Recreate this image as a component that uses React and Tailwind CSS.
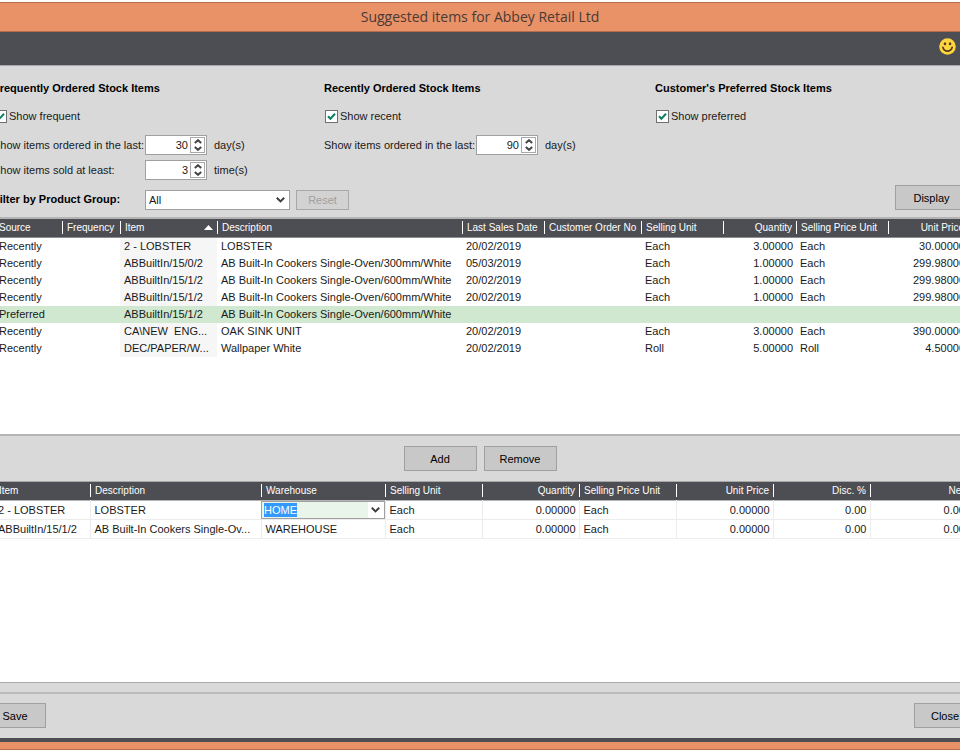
import React, { useEffect, useRef, useState } from 'react';

const STOCK_COLUMNS = [
  { key: 'source', title: 'Source', width: 'w-[70px]' },
  { key: 'frequency', title: 'Frequency', width: 'w-[58px]' },
  { key: 'item', title: 'Item', width: 'w-[97px]', sorted: true },
  { key: 'description', title: 'Description', width: 'w-auto' },
  { key: 'lastSale', title: 'Last Sales Date', width: 'w-[82px]' },
  { key: 'orderNo', title: 'Customer Order No', width: 'w-[97px]' },
  { key: 'unit', title: 'Selling Unit', width: 'w-[82px]' },
  { key: 'quantity', title: 'Quantity', width: 'w-[73px]', right: true },
  { key: 'priceUnit', title: 'Selling Price Unit', width: 'w-[92px]' },
  { key: 'price', title: 'Unit Price', width: 'w-[80px]', right: true },
];

const OVEN_300 = 'AB Built-In Cookers Single-Oven/300mm/White';
const OVEN_600 = 'AB Built-In Cookers Single-Oven/600mm/White';

const STOCK_ROWS = [
  { source: 'Recently', item: '2 - LOBSTER', description: 'LOBSTER', lastSale: '20/02/2019', unit: 'Each', quantity: '3.00000', priceUnit: 'Each', price: '30.00000' },
  { source: 'Recently', item: 'ABBuiltIn/15/0/2', description: OVEN_300, lastSale: '05/03/2019', unit: 'Each', quantity: '1.00000', priceUnit: 'Each', price: '299.98000' },
  { source: 'Recently', item: 'ABBuiltIn/15/1/2', description: OVEN_600, lastSale: '20/02/2019', unit: 'Each', quantity: '1.00000', priceUnit: 'Each', price: '299.98000' },
  { source: 'Recently', item: 'ABBuiltIn/15/1/2', description: OVEN_600, lastSale: '20/02/2019', unit: 'Each', quantity: '1.00000', priceUnit: 'Each', price: '299.98000' },
  { source: 'Preferred', item: 'ABBuiltIn/15/1/2', description: OVEN_600 },
  { source: 'Recently', item: 'CA\\NEW  ENG...', description: 'OAK SINK UNIT', lastSale: '20/02/2019', unit: 'Each', quantity: '3.00000', priceUnit: 'Each', price: '390.00000' },
  { source: 'Recently', item: 'DEC/PAPER/W...', description: 'Wallpaper White', lastSale: '20/02/2019', unit: 'Roll', quantity: '5.00000', priceUnit: 'Roll', price: '4.50000' },
];

const ORDER_COLUMNS = [
  { key: 'item', title: 'Item', width: 'w-[98px]' },
  { key: 'description', title: 'Description', width: 'w-auto' },
  { key: 'warehouse', title: 'Warehouse', width: 'w-[124px]' },
  { key: 'unit', title: 'Selling Unit', width: 'w-[97px]' },
  { key: 'quantity', title: 'Quantity', width: 'w-[97px]', right: true },
  { key: 'priceUnit', title: 'Selling Price Unit', width: 'w-[97px]' },
  { key: 'price', title: 'Unit Price', width: 'w-[97px]', right: true },
  { key: 'discount', title: 'Disc. %', width: 'w-[97px]', right: true },
  { key: 'net', title: 'Net', width: 'w-[98px]', right: true },
];

const ORDER_ROWS = [
  { item: '2 - LOBSTER', description: 'LOBSTER', warehouse: 'HOME', unit: 'Each', quantity: '0.00000', priceUnit: 'Each', price: '0.00000', discount: '0.00', net: '0.00' },
  { item: 'ABBuiltIn/15/1/2', description: 'AB Built-In Cookers Single-Ov...', warehouse: 'WAREHOUSE', unit: 'Each', quantity: '0.00000', priceUnit: 'Each', price: '0.00000', discount: '0.00', net: '0.00' },
];

function Chevron() {
  return (
    <svg width="9" height="6" viewBox="0 0 9 6" fill="none" stroke="#3c3e42" strokeWidth="2" aria-hidden="true">
      <path d="M0.8 0.8 4.5 4.4 8.2 0.8" />
    </svg>
  );
}

function Smiley() {
  return (
    <svg width="17" height="17" viewBox="0 0 16 16" aria-hidden="true">
      <circle cx="8" cy="8" r="7.8" fill="#fcd53f" />
      <ellipse cx="5.6" cy="5.4" rx="1.2" ry="1.5" fill="#5a3a1c" />
      <ellipse cx="10.4" cy="5.4" rx="1.2" ry="1.5" fill="#5a3a1c" />
      <path d="M3.6 8.8c.7 2.4 2.3 3.6 4.4 3.6s3.7-1.2 4.4-3.6" fill="none" stroke="#5a3a1c" strokeWidth="1.6" strokeLinecap="round" />
    </svg>
  );
}

function Button({ className = '', ...props }) {
  return (
    <button
      type="button"
      className={`h-[25px] border border-[#a0a0a0] bg-[#c8c8c8] text-center text-black hover:bg-[#d2d2d2] ${className}`}
      {...props}
    />
  );
}

function Check({ label }) {
  const [on, setOn] = useState(true);
  return (
    <label className="mt-3 flex h-4 items-center gap-[2px] pl-px">
      <span className="grid size-[13px] place-items-center">
        <input
          type="checkbox"
          checked={on}
          onChange={(e) => setOn(e.target.checked)}
          className="col-start-1 row-start-1 size-[13px] appearance-none border border-[#707070] bg-white"
        />
        {on && (
          <svg className="pointer-events-none col-start-1 row-start-1" width="9" height="9" viewBox="0 0 9 9" fill="none" stroke="#0e7f67" strokeWidth="2" aria-hidden="true">
            <path d="M1 4.2 3.4 6.8 8 1.8" />
          </svg>
        )}
      </span>
      {label}
    </label>
  );
}

function Spinner({ id, label, initial, unit, className }) {
  const [value, setValue] = useState(initial);
  return (
    <div className={`flex h-5 items-center ${className}`}>
      <label htmlFor={id} className="w-[152px] shrink-0 whitespace-nowrap">{label}</label>
      <div className="flex h-5 w-[62px] items-center border border-[#a0a0a0] bg-white pr-px">
        <input
          id={id}
          inputMode="numeric"
          value={value}
          onChange={(e) => setValue(Number(e.target.value) || 0)}
          className="w-full min-w-0 pr-[2px] text-right outline-none"
        />
        <div className="flex h-4 w-[15px] shrink-0 flex-col border border-[#a8a8a8]">
          <button type="button" aria-label="Increase" onClick={() => setValue(value + 1)} className="flex flex-1 items-center justify-center">
            <svg width="8" height="5" viewBox="0 0 8 5" fill="none" stroke="#444" strokeWidth="2"><path d="M0.8 4 4 1.2 7.2 4" /></svg>
          </button>
          <button type="button" aria-label="Decrease" onClick={() => setValue(Math.max(0, value - 1))} className="flex flex-1 items-center justify-center">
            <svg width="8" height="5" viewBox="0 0 8 5" fill="none" stroke="#444" strokeWidth="2"><path d="M0.8 1 4 3.8 7.2 1" /></svg>
          </button>
        </div>
      </div>
      <span className="pl-[7px]">{unit}</span>
    </div>
  );
}

function HeaderRow({ columns }) {
  return (
    <tr>
      {columns.map((col, i) => (
        <th key={col.key} scope="col" className={`${col.width} p-0 text-[10px] font-normal`}>
          <div
            className={`flex h-[13px] items-center whitespace-nowrap leading-[13px] ${i > 0 ? 'border-l border-white pl-[4px]' : 'pl-[7px]'} ${col.right ? 'justify-end pr-[4px]' : 'justify-between'}`}
          >
            {col.title}
            {col.sorted && (
              <svg className="mr-[4px]" width="9" height="5" viewBox="0 0 9 5" fill="#fff" aria-hidden="true"><path d="M4.5 0 9 5H0z" /></svg>
            )}
          </div>
        </th>
      ))}
    </tr>
  );
}

function WarehousePicker() {
  const ref = useRef(null);
  const [value, setValue] = useState('HOME');

  useEffect(() => {
    ref.current.focus();
    ref.current.select();
  }, []);

  return (
    <div className="flex h-[18px] items-center border border-[#a0a0a0] bg-[#e9f5ea] pl-[2px]">
      <input
        ref={ref}
        aria-label="Warehouse"
        value={value}
        onChange={(e) => setValue(e.target.value)}
        className="h-[14px] w-full min-w-0 leading-[14px] outline-none selection:bg-[#3399ff] selection:text-white"
      />
      <button type="button" aria-label="Choose warehouse" className="flex h-full w-4 shrink-0 items-center justify-center bg-white">
        <Chevron />
      </button>
    </div>
  );
}

function StockTable() {
  return (
    <div className="min-h-[219px] grow border-y-2 border-[#b4b4b4] bg-white">
      <table className="w-full table-fixed border-collapse">
        <thead className="h-[18px] border-b border-[#8c8d90] bg-[#4d4e53] text-white">
          <HeaderRow columns={STOCK_COLUMNS} />
        </thead>
        <tbody>
          {STOCK_ROWS.map((row, r) => {
            const preferred = row.source === 'Preferred';
            return (
              <tr key={r} className={`h-[17px] ${preferred ? 'bg-[#cfe8cf]' : ''}`}>
                {STOCK_COLUMNS.map((col, i) => (
                  <td
                    key={col.key}
                    className={`whitespace-pre p-0 leading-[17px] ${i > 0 ? 'pl-[4px]' : 'pl-[7px]'} ${col.right ? 'pr-[3px] text-right' : ''} ${col.sorted && !preferred ? 'bg-[#f6f6f6]' : ''}`}
                  >
                    {row[col.key]}
                  </td>
                ))}
              </tr>
            );
          })}
        </tbody>
      </table>
    </div>
  );
}

function OrderTable() {
  return (
    <div className="min-h-[202px] grow border-y border-[#a8a8a8] bg-white">
      <table className="w-full table-fixed border-collapse">
        <thead className="h-[18px] border-b border-[#b4b4b4] bg-[#4d4e53] text-white">
          <HeaderRow columns={ORDER_COLUMNS} />
        </thead>
        <tbody>
          {ORDER_ROWS.map((row, r) => (
            <tr key={r} className="h-[19px] border-b border-[#ececec]">
              {ORDER_COLUMNS.map((col, i) => {
                if (col.key === 'warehouse' && r === 0) {
                  return <td key={col.key} className="p-0"><WarehousePicker /></td>;
                }
                return (
                  <td
                    key={col.key}
                    className={`whitespace-nowrap p-0 leading-[18px] ${i > 0 ? 'border-l border-[#ececec] pl-[4px]' : 'pl-[6px]'} ${col.right ? 'pr-[3px] text-right' : ''}`}
                  >
                    {row[col.key]}
                  </td>
                );
              })}
            </tr>
          ))}
        </tbody>
      </table>
    </div>
  );
}

export default function App() {
  return (
    <div className="overflow-hidden bg-white font-['Liberation_Sans',Arial,sans-serif] text-[11px] leading-4 text-[#1a1a1a]">
      <div className="-mx-4 flex min-h-screen flex-col pt-[2px]">
        <header className="flex h-[30px] items-center justify-center border-y border-[#b56d4e] bg-[#e99167]">
          <h1 className="font-['Open_Sans','Noto_Sans',sans-serif] text-sm text-[#4a3a34]">Suggested items for Abbey Retail Ltd</h1>
        </header>

        <div className="flex h-[33px] items-center justify-end bg-[#4d4e53] pb-1 pr-5">
          <button type="button" aria-label="Feedback"><Smiley /></button>
        </div>

        <main className="flex grow flex-col border-t border-[#a8a8aa] bg-[#d9d9d9] pt-[14px]">
          <div className="grid grid-cols-[331px_331px_1fr] pl-[9px]">
            <section>
              <h2 className="font-bold text-black">Frequently Ordered Stock Items</h2>
              <Check label="Show frequent" />
              <Spinner id="frequent-days" label="Show items ordered in the last:" initial={30} unit="day(s)" className="mt-[11px]" />
              <Spinner id="frequent-times" label="Show items sold at least:" initial={3} unit="time(s)" className="mt-[5px]" />
            </section>
            <section>
              <h2 className="font-bold text-black">Recently Ordered Stock Items</h2>
              <Check label="Show recent" />
              <Spinner id="recent-days" label="Show items ordered in the last:" initial={90} unit="day(s)" className="mt-[11px]" />
            </section>
            <section>
              <h2 className="font-bold text-black">Customer's Preferred Stock Items</h2>
              <Check label="Show preferred" />
            </section>
          </div>

          <div className="mt-[5px] flex items-end pb-[7px] pl-[9px] pr-2">
            <label htmlFor="product-group" className="w-[152px] shrink-0 pb-[3px] font-bold text-black">Filter by Product Group:</label>
            <div className="grid h-5 w-[145px] items-center">
              <select id="product-group" className="col-start-1 row-start-1 h-5 w-full appearance-none border border-[#a0a0a0] bg-white px-[3px]">
                <option>All</option>
              </select>
              <span className="pointer-events-none col-start-1 row-start-1 justify-self-end pr-[5px]"><Chevron /></span>
            </div>
            <button type="button" disabled className="ml-[6px] h-5 w-[53px] border border-[#a8a8a8] bg-[#d2d2d2] text-[#a0a0a0]">Reset</button>
            <Button className="ml-auto w-[73px]">Display</Button>
          </div>

          <div className="flex grow flex-col px-2">
            <StockTable />
            <div className="flex justify-center gap-[7px] py-[10px]">
              <Button className="w-[73px]">Add</Button>
              <Button className="w-[73px]">Remove</Button>
            </div>
            <OrderTable />
          </div>

          <footer className="mt-[9px] flex justify-between border-t-2 border-[#bcbcbc] pb-[10px] pt-[9px]">
            <Button className="w-[62px]">Save</Button>
            <Button className="w-[62px]">Close</Button>
          </footer>
        </main>

        <div className="h-[12px] border-b border-t-4 border-b-[#b56d4e] border-t-[#4d4e53] bg-[#e99167]" />
      </div>
    </div>
  );
}
